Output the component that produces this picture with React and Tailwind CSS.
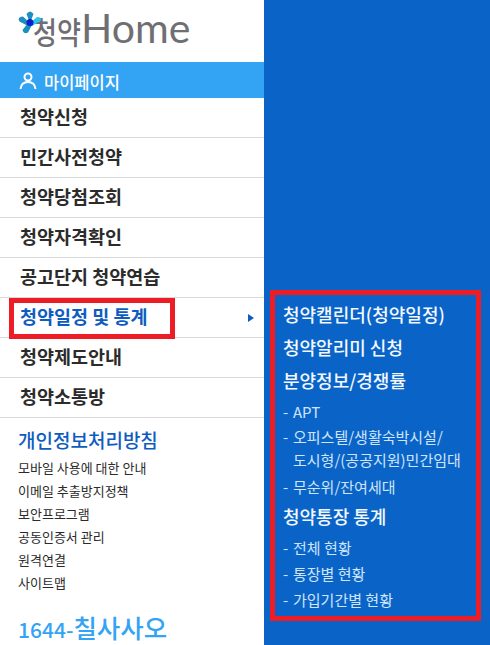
import React from 'react';

const FONT = { fontFamily: '"Noto Sans CJK KR", "Noto Sans", sans-serif' };

const menus = ['청약신청', '민간사전청약', '청약당첨조회', '청약자격확인', '공고단지 청약연습', '청약일정 및 통계', '청약제도안내', '청약소통방'];
const links = ['모바일 사용에 대한 안내', '이메일 추출방지정책', '보안프로그램', '공동인증서 관리', '원격연결', '사이트맵'];

const Logo = () => (
  <div className="relative h-[62px] pl-[33px] pt-[8px]">
    <svg className="absolute left-[18px] top-[11px] z-10" width="24" height="24" viewBox="0 0 24 24">
      <path d="M12 12 L8.500 3 Q12 -2 15.500 3 Z" fill="#1b8fbd" />
      <path d="M12 12 L5 5.500 Q-1 6 1.500 10.500 L10 15 Z" fill="#1b8fbd" />
      <path d="M12 12 L19 6 Q24.500 6 22.500 10 L14 15 Z" fill="#2bc4ee" />
      <path d="M10 12 L4.500 19 Q6 24 10 21.500 L14 14 Z" fill="#1b8fbd" />
      <circle cx="12" cy="11.500" r="3.500" fill="#0a1fd0" />
    </svg>
    <div className="flex items-end h-[40px] text-[#6f6f73] leading-none whitespace-nowrap">
      <span className="inline-block text-[31px] font-medium origin-left scale-x-[.84] mr-[-9px] mb-[2px]">청약</span>
      <span className="text-[41px] font-normal" style={{ fontFamily: 'Lato, sans-serif' }}>Home</span>
    </div>
  </div>
);

const UserIcon = () => (
  <svg className="mt-[2px]" width="18" height="18" viewBox="0 0 18 18" fill="none" stroke="white" strokeWidth="2">
    <circle cx="9" cy="5" r="3.5" />
    <path d="M1.5 17 C2 12 5 10 9 10 C13 10 16 12 16.500 17" />
  </svg>
);

const Head = ({ children }) => (
  <div className="text-[18px] font-medium text-[#f2f8fe] leading-[33px] whitespace-nowrap">{children}</div>
);

const Sub = ({ children }) => (
  <div className="text-[15px] text-[#cfe5fb] leading-[23px] pl-[10px] relative whitespace-nowrap">
    <span className="absolute left-0">-</span>
    {children}
  </div>
);

export default function App() {
  return (
    <div className="w-[490px] h-[645px] overflow-hidden flex bg-[#0a64c8]" style={FONT}>
      <aside className="w-[264px] h-full bg-white shrink-0">
        <Logo />
        <div className="h-[36px] bg-[#33a3f4] flex items-center pl-[19px] gap-[7px] text-white text-[16.500px] font-medium">
          <UserIcon />
          <span className="pt-[5px]">마이페이지</span>
        </div>
        <ul>
          {menus.map((m, i) => (
            <li key={m} className={`relative h-[40px] flex items-center pl-[20px] pb-[2px] border-b border-[#d9d9d9] text-[18.500px] font-bold ${i === 5 ? 'text-[#0f5cc0]' : 'text-[#2b2b2b]'}`}>
              {m}
              {i === 5 && (
                <>
                  <span className="absolute left-[9px] top-0 w-[166px] h-[41px] border-[5px] border-[#ee1c25]" />
                  <span className="absolute left-[248px] top-[16px] w-0 h-0 border-y-[4px] border-y-transparent border-l-[6px] border-l-[#0f5cc0]" />
                </>
              )}
            </li>
          ))}
        </ul>
        <div className="pl-[18px] pt-[8px]">
          <div className="text-[19px] font-medium text-[#0f5cc0] leading-[28px] mb-[2px]">개인정보처리방침</div>
          {links.map(l => (
            <div key={l} className="text-[13px] text-[#2b2b2b] leading-[23px]">{l}</div>
          ))}
          <div className="flex items-baseline text-[#33a3f4] font-medium mt-[16px] leading-[34px] whitespace-nowrap">
            <span className="text-[21px]">1644-</span>
            <span className="text-[25.500px]">칠사사오</span>
          </div>
        </div>
      </aside>
      <div className="pl-[6px] pt-[290px]">
        <div className="w-[211px] h-[331px] border-[5px] border-[#ee1c25] pl-[8px] pt-[3px]">
          <Head>청약캘린더(청약일정)</Head>
          <Head>청약알리미 신청</Head>
          <Head>분양정보/경쟁률</Head>
          <div className="flex flex-col gap-[2px] mt-[3px] mb-[1px]">
            <Sub>APT</Sub>
            <Sub>오피스텔/생활숙박시설/<br />도시형/(공공지원)민간임대</Sub>
            <div className="pt-[2px]"><Sub>무순위/잔여세대</Sub></div>
          </div>
          <div className="pt-[1px]"><Head>청약통장 통계</Head></div>
          <div className="flex flex-col gap-[3px] mt-[3px]">
            <Sub>전체 현황</Sub>
            <Sub>통장별 현황</Sub>
            <Sub>가입기간별 현황</Sub>
          </div>
        </div>
      </div>
    </div>
  );
}
